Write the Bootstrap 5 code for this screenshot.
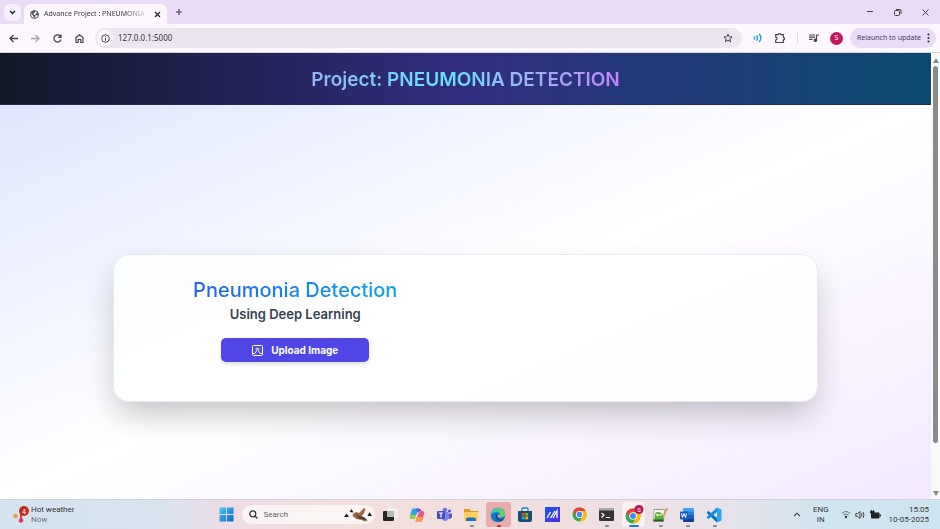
<!DOCTYPE html>
<html lang="en">
<head>
<meta charset="utf-8">
<meta name="viewport" content="width=device-width, initial-scale=1">
<title>Advance Project : PNEUMONIA DETECTION</title>
<link href="https://cdn.jsdelivr.net/npm/bootstrap@5.3.0/dist/css/bootstrap.min.css" rel="stylesheet">
<style>
body{font-family:"Noto Sans","Open Sans",sans-serif;font-size:8px;line-height:10px;color:#333;overflow:hidden}
svg{display:block;flex:none}
.plain{border:0;background:none;padding:0;color:#46434f;display:flex;align-items:center;justify-content:center}
/* browser chrome */
.tabstrip{background:#eadcf6;height:24px}
.tabmenu{width:17px;height:17px;background:#f7effd;border-radius:6px;margin-left:4px}
.tab-open{background:#fdf7ff;height:20px;width:143px;border-radius:7px 7px 0 0;margin-left:3px;padding:0 6px;gap:5px;color:#3b3744;font-size:7px}
.tab-title{white-space:nowrap;-webkit-mask-image:linear-gradient(90deg,#000 80%,rgba(0,0,0,.2));mask-image:linear-gradient(90deg,#000 80%,rgba(0,0,0,.2))}
.wincontrols{gap:19px;padding-right:10px}
.toolbar{background:#fdf7ff;height:29px;padding:0 4px 0 8px;border-bottom:1px solid #d9d3de}
.navset{gap:11px}
.address{background:#ece6f1;height:20px;border-radius:10px;margin-left:10px;padding:0 9px 0 2px}
.info{width:16px;height:16px;border-radius:50%;background:#fdf7ff;display:flex;align-items:center;justify-content:center}
.address input{border:0;background:none;outline:0;padding:0 0 0 5px;font-size:8px;line-height:14px;color:#35323c;min-width:0}
.tools{gap:11px;margin-left:11px}
.sep{width:1px;height:10px;background:#e3d1f3}
.avatar{width:13px;height:13px;border-radius:50%;background:#c2185b;color:#fff;font-size:7px}
.relaunch{background:#eadcf9;color:#4b3568;border-radius:10px;height:20px;padding:0 6px 0 7px;gap:6px;font-size:7px;margin-left:-4px;white-space:nowrap}
/* page */
.page-font{font-family:Inter,"Open Sans",sans-serif}
.hero{background:linear-gradient(90deg,#111827,#312e81 50%,#0c4a6e);height:52px;border-bottom:1px solid #242d5d;padding-top:2px}
.hero h1{font-size:19px;line-height:28px;font-weight:600;margin:0;background:linear-gradient(90deg,#93b4f8,#67e8f9 42%,#a5a9f8 75%,#c084fc);-webkit-background-clip:text;background-clip:text;color:transparent}
.canvas-bg{background:linear-gradient(to bottom right,#e0e7ff,#fff 50%,#f3e8ff);padding-top:52px}
.panel{width:76%;max-width:705px;min-height:148px;border:1px solid #e9ebf2;border-radius:16px;background:rgba(255,255,255,.86);box-shadow:0 16px 32px -6px rgba(0,0,0,.25);padding:22px 23px;gap:24px}
.panel h2{font-size:20px;line-height:26px;font-weight:500;margin:0;background:linear-gradient(90deg,#2563eb,#0ea5e9);-webkit-background-clip:text;background-clip:text;color:transparent}
.panel h3{font-size:13px;line-height:20px;font-weight:600;margin:1px 0 14px;color:#374151}
.upload{background:#4f46e5;color:#fff;border:0;border-radius:5px;width:148px;height:24px;font-size:10px;line-height:14px;font-weight:700;gap:8px;box-shadow:0 2px 4px rgba(0,0,0,.14)}
.scroller{width:9px;background:#fafafa;padding:5px 0 3px;flex:none}
.thumb{width:5px;border-radius:3px;background:#8b8b8b;margin:3px 0 auto;height:86%}
/* taskbar */
.taskbar{font-family:Roboto,"Noto Sans",sans-serif;height:30px;flex:none;display:grid;grid-template-columns:1fr auto 1fr;align-items:center;border-top:1px solid #cfd2dc;background:linear-gradient(90deg,#d3e3ef,#d8e3f0 17%,#efdce5 25%,#f3dfdc 38%,#f1dfe0 60%,#e9e2ea 76%,#cfe5f0 88%,#cde4f1)}
.weather{padding-left:12px;gap:2px}
.weather-icon{width:17px;height:20px}
.app{width:27px;height:27px;position:relative}
.app.run::after{content:"";position:absolute;left:12px;bottom:1px;width:4px;height:2px;border-radius:1px;background:#8b8588}
.app.alert-app::before{content:"";position:absolute;inset:1px 1px;border-radius:3px;background:#e9acad}
.app.alert-app svg{position:relative}
.app.alert-app::after{background:#c82e27}
.app.live::before{content:"";position:absolute;inset:1px 2px;border-radius:3px;background:#faf1f3}
.app.live svg{position:relative}
.app.live::after{left:9px;width:10px;background:#1f7ccf}
.finder{width:133px;height:19px;border-radius:10px;background:#fbf4f5;padding:0 3px 0 7px;gap:6px;margin:0 2px}
.finder input{border:0;background:none;outline:0;padding:0;font-size:8px;line-height:14px;width:60px;color:#555}
.finder input::placeholder{color:#666;opacity:1}
.tray{gap:12px;padding-right:11px}
.tray-icons{gap:4px;margin-right:-4px}
</style>
<script src="https://cdn.jsdelivr.net/npm/bootstrap@5.3.0/dist/js/bootstrap.bundle.min.js"></script>
</head>
<body class="vh-100 d-flex flex-column">
<header>
  <div class="tabstrip d-flex align-items-center">
    <button class="plain tabmenu" aria-label="Search tabs"><svg width="7" height="5" viewBox="0 0 7 5" fill="none" stroke="#222" stroke-width="1.4"><path d="M1 1l2.500 2.500L6 1"/></svg></button>
    <div class="tab-open d-flex align-items-center align-self-end">
      <svg width="9" height="9" viewBox="0 0 18 18"><circle cx="9" cy="9" r="8" fill="#fff" stroke="#4b4b55" stroke-width="2"/><path d="M2 7l4-5 5 0-1 3-3 1v3l4 1v3l-3 3-2-5zM12 6l4-1 1 5-3 1-3-2z" fill="#4b4b55"/></svg>
      <span class="tab-title">Advance Project : PNEUMONIA</span>
      <button class="plain ms-auto" aria-label="Close tab"><svg width="7" height="7" viewBox="0 0 7 7" stroke="#222" stroke-width="1.200"><path d="M1 1l5 5M6 1L1 6"/></svg></button>
    </div>
    <button class="plain ms-2" aria-label="New tab"><svg width="8" height="8" viewBox="0 0 8 8" stroke="#46434f" stroke-width="1.200"><path d="M4 1v6M1 4h6"/></svg></button>
    <div class="wincontrols d-flex align-items-center ms-auto">
      <button class="plain" aria-label="Minimize"><svg width="8" height="8" viewBox="0 0 8 8" stroke="#444"><path d="M1 3.500h6"/></svg></button>
      <button class="plain" aria-label="Restore"><svg width="9" height="9" viewBox="0 0 9 9" fill="none" stroke="#444"><rect x="1.500" y="2.500" width="5" height="5" rx="1"/><path d="M3 1.500h4.200q.8 0 .8.8V6"/></svg></button>
      <button class="plain" aria-label="Close"><svg width="9" height="9" viewBox="0 0 9 9" stroke="#444"><path d="M1.500 1.500l6 6M7.500 1.500l-6 6"/></svg></button>
    </div>
  </div>
  <div class="toolbar d-flex align-items-center">
    <nav class="navset d-flex" aria-label="Browser">
      <button class="plain" aria-label="Back"><svg width="11" height="11" viewBox="0 0 11 11" fill="none" stroke="currentColor" stroke-width="1.300"><path d="M10 5.500H2M5.500 2L2 5.500 5.500 9"/></svg></button>
      <button class="plain" aria-label="Forward"><svg width="11" height="11" viewBox="0 0 11 11" fill="none" stroke="#a9a4ae" stroke-width="1.300"><path d="M1 5.500h8M5.500 2L9 5.500 5.500 9"/></svg></button>
      <button class="plain" aria-label="Reload"><svg width="11" height="11" viewBox="0 0 11 11" fill="none" stroke="currentColor" stroke-width="1.300"><path d="M8.800 4A3.600 3.600 0 1 0 9 6.500M9 1.500V4.300H6.200"/></svg></button>
      <button class="plain" aria-label="Home"><svg width="11" height="11" viewBox="0 0 11 11" fill="none" stroke="currentColor" stroke-width="1.200"><path d="M2 4.500L5.500 1.800 9 4.500v5H6.800v-3H4.200v3H2z"/></svg></button>
    </nav>
    <div class="address d-flex align-items-center flex-grow-1">
      <span class="info"><svg width="9" height="9" viewBox="0 0 9 9" fill="none" stroke="#46434f"><circle cx="4.500" cy="4.500" r="3.800"/><path d="M4.500 4v2.700M4.500 2.200v1"/></svg></span>
      <input class="flex-grow-1" type="text" value="127.0.0.1:5000" aria-label="Address">
      <button class="plain" aria-label="Bookmark"><svg width="10" height="10" viewBox="0 0 24 24" fill="none" stroke="currentColor" stroke-width="2.400"><path d="M12 2.500l2.800 6.400 7 .6-5.300 4.600 1.600 6.900L12 17.400 5.900 21l1.600-6.900L2.200 9.500l7-.6z"/></svg></button>
    </div>
    <div class="tools d-flex align-items-center">
      <button class="plain" aria-label="Read aloud"><svg width="10" height="10" viewBox="0 0 10 10" fill="none" stroke="#159cf0" stroke-width="1.300"><path d="M1 3.500q1.200 1.500 0 3M3.500 2.500q2 2.500 0 5M6.200 1q3.400 4 0 8"/></svg></button>
      <button class="plain" aria-label="Extensions"><svg width="12" height="12" viewBox="0 0 12 12" fill="none" stroke="currentColor" stroke-width="1.200"><path d="M1.700 2.700h2.500q0-1.200 1.300-1.200t1.300 1.200h2.500v2.600q1.200 0 1.200 1.300T9.300 7.900v2.600H1.700V8q1.400-.1 1.400-1.400T1.700 5.200z"/></svg></button>
      <span class="sep"></span>
      <button class="plain" aria-label="Media"><svg width="10" height="10" viewBox="0 0 10 10" fill="none" stroke="currentColor" stroke-width="1.200"><path d="M0 2h6M0 4.200h6M0 6.400h3.500M7.500 7V2H10"/><circle cx="6.400" cy="7.200" r="1.200" fill="currentColor"/></svg></button>
      <button class="plain avatar" aria-label="Profile">S</button>
      <button class="plain relaunch">Relaunch to update <svg width="3" height="10" viewBox="0 0 3 10" fill="#3b2f4c"><circle cx="1.500" cy="1.500" r="1.100"/><circle cx="1.500" cy="5" r="1.100"/><circle cx="1.500" cy="8.500" r="1.100"/></svg></button>
    </div>
  </div>
</header>

<div class="d-flex flex-grow-1">
  <div class="page-font d-flex flex-column flex-grow-1">
    <div class="hero d-flex align-items-center justify-content-center"><h1>Project: PNEUMONIA DETECTION</h1></div>
    <main class="canvas-bg flex-grow-1 d-flex align-items-center justify-content-center">
      <section class="panel d-flex">
        <div class="w-50 d-flex flex-column align-items-center">
          <h2>Pneumonia Detection</h2>
          <h3>Using Deep Learning</h3>
          <button class="upload d-flex align-items-center justify-content-center"><svg width="11" height="11" viewBox="0 0 11 11" fill="none" stroke="#fff"><rect x=".5" y=".5" width="10" height="10" rx="1"/><path d="M1 8.500h2L5.500 4 8 8.500h2M3.500 4q2-1.800 4 0" stroke-width=".9"/></svg>Upload Image</button>
        </div>
        <div class="w-50"></div>
      </section>
    </main>
  </div>
  <div class="scroller d-flex flex-column align-items-center" aria-hidden="true">
    <svg width="6" height="5" viewBox="0 0 6 5" fill="#858585"><path d="M3 0l3 5H0z"/></svg>
    <div class="thumb"></div>
    <svg width="6" height="5" viewBox="0 0 6 5" fill="#858585"><path d="M0 0h6L3 5z"/></svg>
  </div>
</div>

<footer class="taskbar">
  <div class="weather d-flex align-items-center">
    <svg class="weather-icon" viewBox="0 0 17 20"><circle cx="3.500" cy="11" r="2.300" fill="#f59a3c"/><path d="M9 8v7" stroke="#e0355c" stroke-width="2"/><circle cx="9" cy="15.500" r="2.200" fill="#e0355c"/><circle cx="12" cy="6" r="5" fill="#c42b1c"/><text x="12" y="8.500" font-size="7" fill="#fff" text-anchor="middle">4</text></svg>
    <div>Hot weather<br><span class="text-secondary">Now</span></div>
  </div>
  <div class="d-flex align-items-center">
    <button class="plain app" aria-label="Start"><svg width="15" height="15" viewBox="0 0 15 15"><defs><linearGradient id="win" x2="1" y2="1"><stop stop-color="#4cc9f8"/><stop offset="1" stop-color="#0568c8"/></linearGradient></defs><path d="M.5 .5h6.600v6.600H.5zM7.900 .5h6.600v6.600H7.900zM.5 7.900h6.600v6.600H.5zM7.900 7.900h6.600v6.600H7.900z" fill="url(#win)"/></svg></button>
    <div class="finder d-flex align-items-center">
      <svg width="9" height="9" viewBox="0 0 9 9" fill="none" stroke="#333" stroke-width="1.300"><circle cx="3.800" cy="3.800" r="3"/><path d="M6 6l2.500 2.500"/></svg>
      <input type="text" placeholder="Search" aria-label="Search">
      <svg class="ms-auto" width="28" height="16" viewBox="0 0 28 16"><path d="M0 10l2.500-3.500L5 10zM5.500 5L7.500 2l2 3.500zM23.500 9l2-4 2.500 4z" fill="#222"/><path d="M9 7l3-2 3 1 5-5 1.500 1-2 5-2 2 3 2 2 4-5-2-5-1-4-3z" fill="#9b6643"/><path d="M12 6l3 3 5 1 4 4-6-2-4-1z" fill="#543b30"/></svg>
    </div>
    <button class="plain app" aria-label="Task view"><svg width="15" height="15" viewBox="0 0 15 15"><rect x="4" y="1" width="11" height="10" rx="1" fill="#efeeee"/><rect x="0" y="4" width="11" height="10" rx="1" fill="#252525"/><path d="M4 4h7v6H5q-1 0-1-1z" fill="#b8b8b8"/></svg></button>
    <button class="plain app" aria-label="Copilot"><svg width="16" height="16" viewBox="0 0 16 16"><path d="M4 1.500h5.500L7 10q-.6 2-2.500 2H3Q0 12 1 8.500l1.500-5q.5-2 1.500-2z" fill="#27a5ea"/><path d="M2 7.500L7.500 8 7 10q-.6 2-2.500 2H3Q0 12 1 9z" fill="#a3c93e"/><path d="M12 14.500H6.500L9 6q.6-2 2.500-2H13q3 0 2 3.500l-1.500 5q-.5 2-1.500 2z" fill="#e4578f"/><path d="M6.500 14.500L8 9.500l6 .8-.6 2.200q-.5 2-2 2z" fill="#f79d43"/><path d="M7 1.500h3q1.500 0 2 1.500l.4 1H11Q9.300 4 8.800 6L7.800 3.500z" fill="#5f50d6"/><path d="M8.800 6l1.100-.5L7.500 10l-1.200.5z" fill="#fff"/></svg></button>
    <button class="plain app" aria-label="Teams"><svg width="16" height="15" viewBox="0 0 16 15"><circle cx="9" cy="3" r="2.300" fill="#6f79dc"/><circle cx="13.500" cy="4" r="1.600" fill="#5059c9"/><path d="M6 5h6.500v6q-.5 3-3.300 3T6 11z" fill="#7b83eb"/><path d="M12.500 6.500H16V10q-1 2.500-3.500 2z" fill="#5059c9"/><rect x="1" y="4" width="8" height="8" rx="1" fill="#464eb8"/><path d="M3 6h4M5 6v4.500" stroke="#fff" stroke-width="1.200"/></svg></button>
    <button class="plain app run" aria-label="File Explorer"><svg width="16" height="14" viewBox="0 0 16 14"><path d="M1 1h5l2 2h7v4H1z" fill="#dd9b19"/><rect x="1" y="4" width="14" height="9" rx="1" fill="#ffd15c"/><path d="M3 13v-2q0-1.500 1.500-1.500h7q1.500 0 1.500 1.500v2z" fill="#1574c5"/></svg></button>
    <button class="plain app run alert-app" aria-label="Edge"><svg width="16" height="16" viewBox="0 0 16 16"><circle cx="8" cy="8" r="7.300" fill="#1276c9"/><path d="M1 7Q2 1 8 .7 14.500 1 15.300 7q0 3-3.800 3-3 0-1.500-2Q10 5 7 5 3 5 1 8z" fill="#38c6bd"/><path d="M7 1q7 0 8.300 6-.3 3-4 3-2.700 0-1.500-2 1.500-3-3-5z" fill="#65cf6b"/><path d="M6 7q-2 5 3 7 3 .5 5-2-3 1-5-.7Q7 10 7.500 7z" fill="#164d91"/><path d="M7.800 7.500q2-.5 1.500 1.300.5 1.800 3 1.200-3 1.700-4.400-.5z" fill="#e9acad"/></svg></button>
    <button class="plain app" aria-label="Microsoft Store"><svg width="16" height="16" viewBox="0 0 16 16"><path d="M5 4V2q0-1 1-1h4q1 0 1 1v2" fill="none" stroke="#1689c6" stroke-width="1.300"/><path d="M1 4h14v9q0 2-2 2H3q-2 0-2-2z" fill="#174d79"/><path d="M4.800 6h2.800v2.800H4.800z" fill="#f25022"/><path d="M8.300 6h2.800v2.800H8.300z" fill="#7fba00"/><path d="M4.800 9.500h2.800v2.800H4.800z" fill="#25a9ef"/><path d="M8.300 9.500h2.800v2.800H8.300z" fill="#ffb900"/></svg></button>
    <button class="plain app" aria-label="MyASUS"><svg width="15" height="15" viewBox="0 0 15 15"><defs><linearGradient id="my" x2="1" y2="1"><stop stop-color="#1459e8"/><stop offset="1" stop-color="#5727e5"/></linearGradient></defs><path d="M0 0h15v15H0z" fill="url(#my)"/><path d="M2 11l3.500-6M5.500 11L10 4M8 11l4-7v7" stroke="#fff" stroke-width="1.300" fill="none"/></svg></button>
    <button class="plain app" aria-label="Chrome"><svg width="15" height="15" viewBox="0 0 16 16"><circle cx="8" cy="8" r="7.500" fill="#34a853"/><path d="M1.500 4.300A7.500 7.500 0 0 1 14.500 4.300H8L4.800 10z" fill="#ea4335"/><path d="M14.500 4.300A7.500 7.500 0 0 1 7.500 15.500L11.200 9.800 8 4.300z" fill="#fbbc05"/><circle cx="8" cy="8" r="3.800" fill="#fff"/><circle cx="8" cy="8" r="2.900" fill="#4285f4"/></svg></button>
    <button class="plain app run" aria-label="Terminal"><svg width="15" height="13" viewBox="0 0 15 13"><rect width="15" height="13" rx="1" fill="#343434"/><path d="M0 1q0-1 1-1h13q1 0 1 1v1.500H0z" fill="#aaa"/><path d="M2.500 5L5 7 2.500 9.500M7 9.500h4" fill="none" stroke="#fff" stroke-width="1.200"/></svg></button>
    <button class="plain app run live" aria-label="Chrome, active"><svg width="22" height="20" viewBox="0 0 22 20"><g transform="translate(3 3)"><circle cx="8" cy="8" r="7.500" fill="#34a853"/><path d="M1.500 4.300A7.500 7.500 0 0 1 14.500 4.300H8L4.800 10z" fill="#ea4335"/><path d="M14.500 4.300A7.500 7.500 0 0 1 7.500 15.500L11.200 9.800 8 4.300z" fill="#fbbc05"/><circle cx="8" cy="8" r="3.800" fill="#fff"/><circle cx="8" cy="8" r="2.900" fill="#4285f4"/></g><circle cx="17" cy="4.500" r="4.500" fill="#b71958"/><text x="17" y="7" font-size="6" text-anchor="middle" fill="#fff">S</text></svg></button>
    <button class="plain app run" aria-label="Notepad++"><svg width="16" height="16" viewBox="0 0 16 16"><path d="M2 2.500h10.500l-1 12H1z" fill="#f3f5ea" stroke="#a4a88f" stroke-width=".8"/><path d="M2 2.500h10.500" stroke="#777" stroke-dasharray="1 1"/><path d="M3 8q0-3 3-3t4 2l2 4-.5 3H2z" fill="#5cab3c"/><circle cx="5.500" cy="8" r="1.300" fill="#efffc8"/><circle cx="8.500" cy="8" r="1" fill="#efffc8"/><path d="M1.500 12.500h10v2h-10z" fill="#33502a"/><path d="M15.300 1L11.500 9" stroke="#d6963e" stroke-width="1.500"/></svg></button>
    <button class="plain app run" aria-label="Word"><svg width="16" height="16" viewBox="0 0 16 16"><rect x="4" y="1" width="11" height="14" rx="1" fill="#41a5ee"/><path d="M4 4.500h11v3.500H4z" fill="#2b7cd3"/><path d="M4 8h11v3.500H4z" fill="#185abd"/><path d="M4 11.500h11V14q0 1-1 1H5q-1 0-1-1z" fill="#103f91"/><rect x="1" y="4.500" width="8" height="8" rx="1" fill="#185abd"/><path d="M2.500 6.500l1 4 1.500-4 1.500 4 1-4" fill="none" stroke="#fff"/></svg></button>
    <button class="plain app run" aria-label="Visual Studio Code"><svg width="16" height="16" viewBox="0 0 16 16"><path d="M11 .5l4.500 2v11l-4.500 2z" fill="#29a8ed"/><path d="M1 5l1.500-1L11 11v4.500L1 6.200z" fill="#0874bd"/><path d="M11 .5V5L2.500 12 1 11V9.800z" fill="#168ddb"/></svg></button>
  </div>
  <div class="tray d-flex align-items-center justify-content-end">
    <button class="plain" aria-label="Hidden icons"><svg width="8" height="5" viewBox="0 0 8 5" fill="none" stroke="#333" stroke-width="1.100"><path d="M1 4.200L4 1.200l3 3"/></svg></button>
    <div class="text-center">ENG<br>IN</div>
    <div class="tray-icons d-flex align-items-center">
      <svg width="10" height="9" viewBox="0 0 10 9" fill="none" stroke="#6d747b" stroke-width="1"><path d="M.8 3.500q4.200-4 8.400 0M2.300 5.200q2.700-2.500 5.400 0" /><circle cx="5" cy="7" r="1.200" fill="#333" stroke="none"/></svg>
      <svg width="11" height="10" viewBox="0 0 11 10" fill="none" stroke="#444"><path d="M.8 3.700h1.700L5 1.500v7L2.500 6.300H.8zM6.500 3.500q1 1.500 0 3M8 2q2 3 0 6"/></svg>
      <svg width="11" height="9" viewBox="0 0 11 9"><rect x="1" y="2.500" width="8.500" height="6" rx="1" fill="#222"/><path d="M9.500 4.500H11v2H9.500zM0 1h1V0h1v1h1V0h1v1h.5v2L3 4.500 0 3z" fill="#222"/></svg>
    </div>
    <div class="text-end">15:05<br>10-05-2025</div>
  </div>
</footer>
</body>
</html>
